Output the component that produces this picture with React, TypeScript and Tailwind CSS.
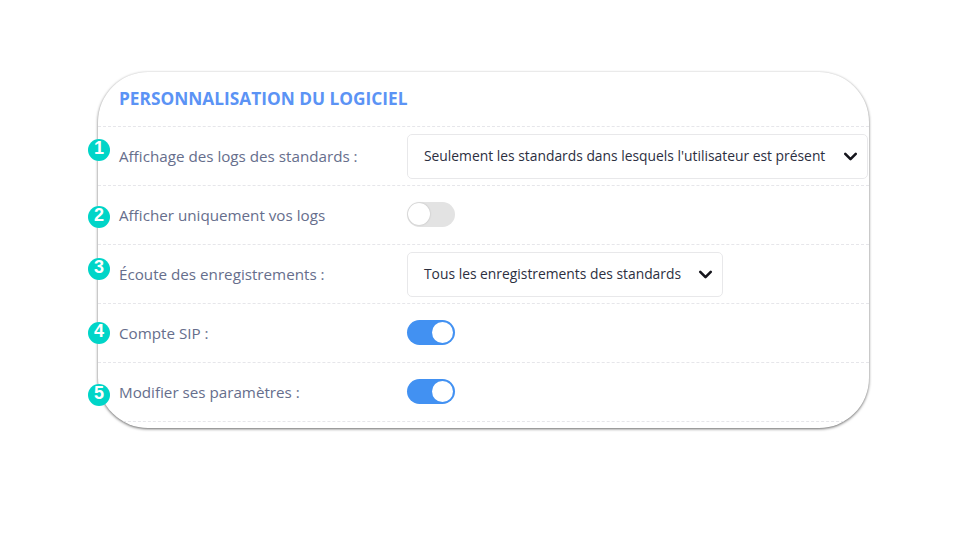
import { ChevronDown } from "lucide-react";

const font = { fontFamily: '"Open Sans", sans-serif' };

function Badge({ n, top }: { n: number; top: string }) {
  return (
    <div
      className={`absolute left-[-10px] flex h-[22px] w-[22px] items-center justify-center rounded-full bg-[#00d5c8] pb-[4px] text-[18px] leading-none font-bold text-white ${top}`}
      style={{ fontFamily: '"Liberation Sans", sans-serif' }}
    >
      {n}
    </div>
  );
}

function Toggle({ on }: { on: boolean }) {
  return on ? (
    <div className="mb-[2px] flex h-[25px] w-[48px] items-center justify-end rounded-full bg-[#4291f2] pr-[2px]">
      <div className="h-[21px] w-[21px] rounded-full bg-white" />
    </div>
  ) : (
    <div className="mb-[2px] flex h-[25px] w-[48px] items-center rounded-full bg-[#e3e3e3] pl-[1px]">
      <div className="h-[22px] w-[22px] rounded-full bg-white shadow-[0_0_2px_rgba(0,0,0,0.2)]" />
    </div>
  );
}

function Select({ label, widthClass }: { label: string; widthClass: string }) {
  return (
    <div
      className={`flex h-[45px] items-center justify-between rounded-[5px] border border-[#e8e8ea] bg-white pr-[6px] pl-[16px] text-[13.85px] text-[#2c2f3f] ${widthClass}`}
    >
      <span className="whitespace-nowrap">{label}</span>
      <ChevronDown size={21} strokeWidth={3} className="text-[#15151c]" />
    </div>
  );
}

function Row({ label, children }: { label: string; children: React.ReactNode }) {
  return (
    <div className="flex h-[59px] items-center border-b border-dashed border-[#e6e6ea]">
      <div className="w-[309px] pl-[21px] text-[15.2px] text-[#666e8c]">{label}</div>
      <div>{children}</div>
    </div>
  );
}

export default function App() {
  return (
    <div className="h-[540px] w-[960px] bg-white pt-[72px] pl-[98px]" style={font}>
      <div className="relative h-[356px] w-[771px] rounded-[50px] bg-white shadow-[0_1px_3px_rgba(0,0,0,0.6)]">
        <div className="h-full overflow-hidden rounded-[50px]">
          <div className="flex h-[55px] items-center border-b border-dashed border-[#e6e6ea] pl-[21px] text-[17.3px] font-bold text-[#5b93f5]">
            PERSONNALISATION DU LOGICIEL
          </div>
          <Row label="Affichage des logs des standards :">
            <Select label="Seulement les standards dans lesquels l'utilisateur est présent" widthClass="w-[461px]" />
          </Row>
          <Row label="Afficher uniquement vos logs">
            <Toggle on={false} />
          </Row>
          <Row label="Écoute des enregistrements :">
            <Select label="Tous les enregistrements des standards" widthClass="w-[316px]" />
          </Row>
          <Row label="Compte SIP :">
            <Toggle on />
          </Row>
          <Row label="Modifier ses paramètres :">
            <Toggle on />
          </Row>
        </div>
        <Badge n={1} top="top-[67px]" />
        <Badge n={2} top="top-[134px]" />
        <Badge n={3} top="top-[186px]" />
        <Badge n={4} top="top-[250px]" />
        <Badge n={5} top="top-[312px]" />
      </div>
    </div>
  );
}
